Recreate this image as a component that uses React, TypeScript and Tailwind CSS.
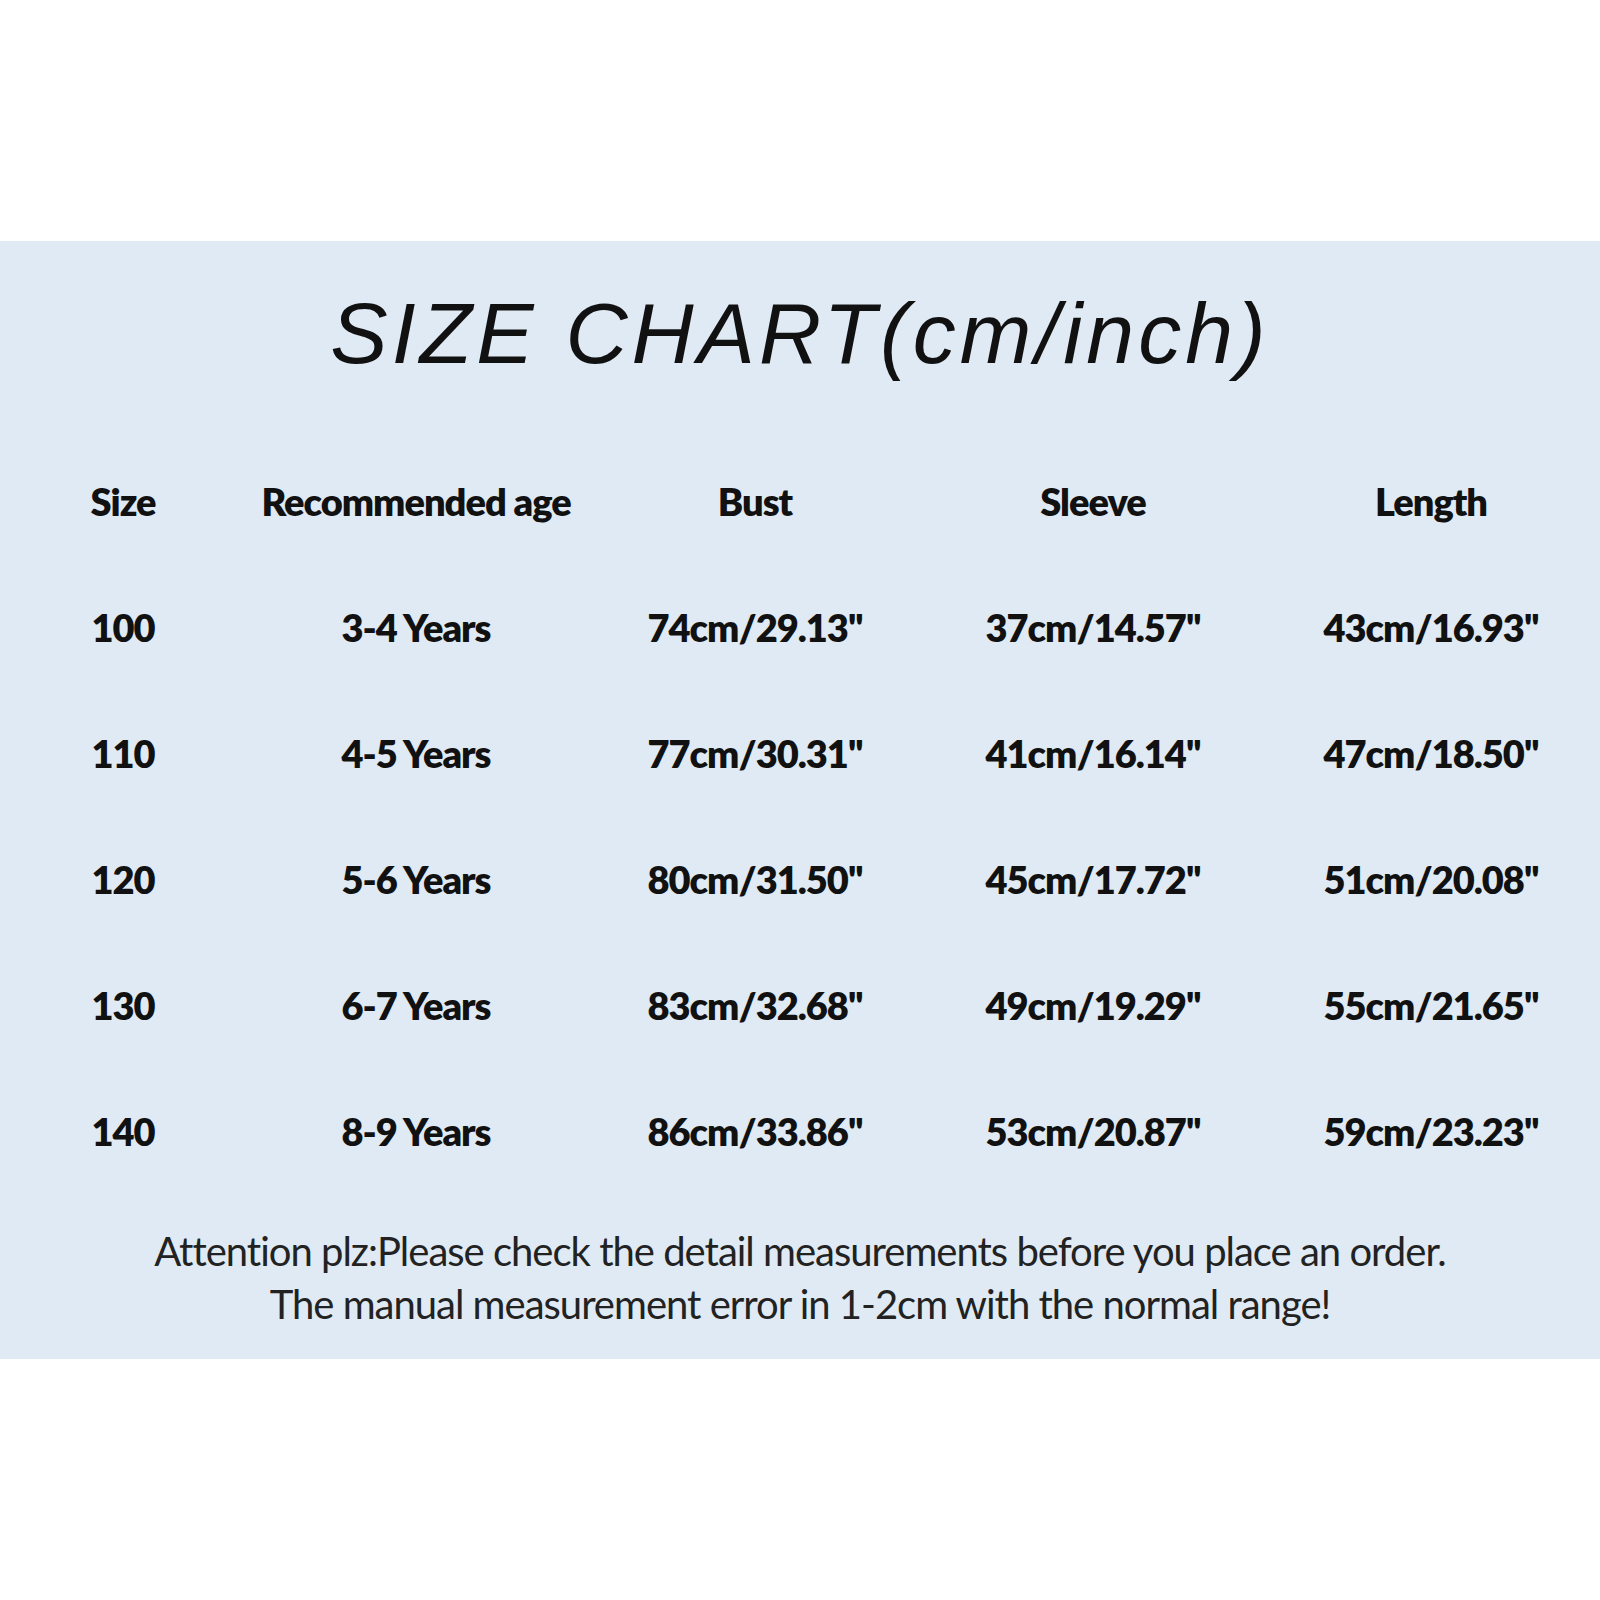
const rows = [
  ["100", "3-4 Years", "74cm/29.13''", "37cm/14.57''", "43cm/16.93''"],
  ["110", "4-5 Years", "77cm/30.31''", "41cm/16.14''", "47cm/18.50''"],
  ["120", "5-6 Years", "80cm/31.50''", "45cm/17.72''", "51cm/20.08''"],
  ["130", "6-7 Years", "83cm/32.68''", "49cm/19.29''", "55cm/21.65''"],
  ["140", "8-9 Years", "86cm/33.86''", "53cm/20.87''", "59cm/23.23''"],
];

const headers = ["Size", "Recommended age", "Bust", "Sleeve", "Length"];

export default function App() {
  return (
    <div className="flex h-[1600px] w-[1600px] flex-col bg-white pt-[241px]">
      <section className="flex flex-col bg-[#dfeaf4] pt-[49px] pb-[28px]">
        {/* title */}
        <h1 className="text-center font-['Liberation_Sans',sans-serif] text-[86px] leading-[86px] font-normal tracking-[4px] italic text-[#111]">
          SIZE CHART(cm/inch)
        </h1>

        {/* table */}
        <div className="mt-[62px] grid grid-cols-[246px_340px_338px_338px_338px] font-['Lato',sans-serif] text-[38px] font-extrabold tracking-[-1px] text-[#111]">
          {headers.map((h) => (
            <div key={h} className="flex h-[126px] items-center justify-center">
              {h}
            </div>
          ))}
          {rows.map((r) =>
            r.map((cell, i) => (
              <div
                key={r[0] + i}
                className="flex h-[126px] items-center justify-center"
              >
                {cell}
              </div>
            )),
          )}
        </div>

        {/* note */}
        <div className="mt-[31px] flex flex-col items-center font-['Lato',sans-serif] text-[40px] leading-[53px] font-normal tracking-[-1px] text-[#222]">
          <p>
            Attention plz:Please check the detail measurements before you place
            an order.
          </p>
          <p>The manual measurement error in 1-2cm with the normal range!</p>
        </div>
      </section>
    </div>
  );
}
